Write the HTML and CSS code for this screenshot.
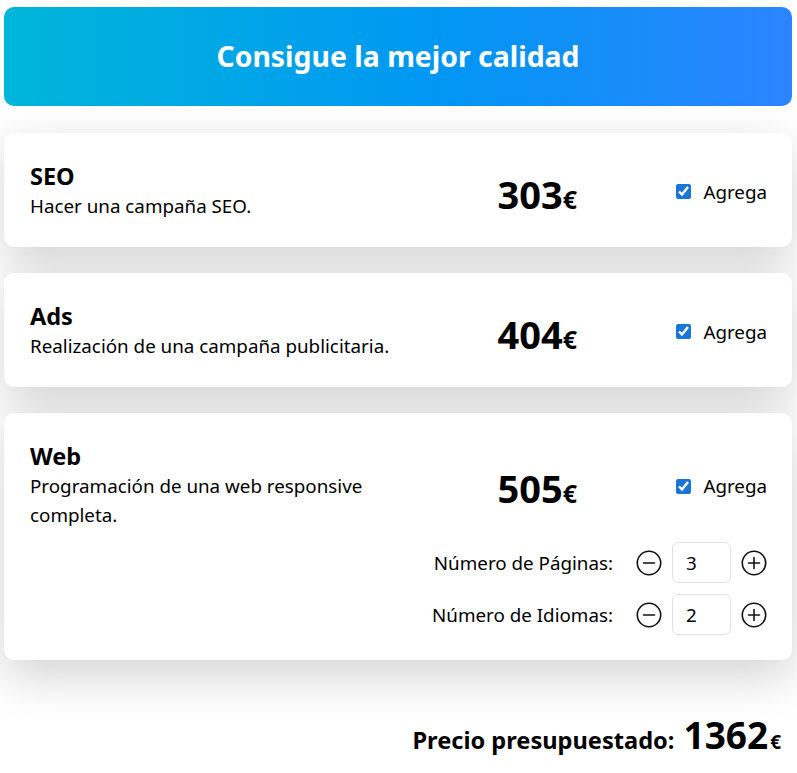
FILE: index.html
```html
<!DOCTYPE html>
<html lang="es">
<head>
<meta charset="utf-8">
<title>Presupuesto</title>
<link rel="stylesheet" href="styles.css">
</head>
<body>
<div class="page">
  <header class="hero">
    <h1 class="hero-title">Consigue la mejor calidad</h1>
  </header>

  <section class="card">
    <div class="card-row">
      <div class="info">
        <h2 class="title">SEO</h2>
        <p class="desc">Hacer una campaña SEO.</p>
      </div>
      <div class="price">303<span class="cur">€</span></div>
      <label class="check"><input type="checkbox" checked><span>Agrega</span></label>
    </div>
  </section>

  <section class="card">
    <div class="card-row">
      <div class="info">
        <h2 class="title">Ads</h2>
        <p class="desc">Realización de una campaña publicitaria.</p>
      </div>
      <div class="price">404<span class="cur">€</span></div>
      <label class="check"><input type="checkbox" checked><span>Agrega</span></label>
    </div>
  </section>

  <section class="card">
    <div class="card-row">
      <div class="info">
        <h2 class="title">Web</h2>
        <p class="desc">Programación de una web responsive completa.</p>
      </div>
      <div class="price">505<span class="cur">€</span></div>
      <label class="check"><input type="checkbox" checked><span>Agrega</span></label>
    </div>
    <div class="options">
      <div class="opt-row">
        <span class="opt-label">Número de Páginas:</span>
        <button class="icon-btn" type="button" aria-label="menos">
          <svg viewBox="0 0 26 26" width="26" height="26"><circle cx="13" cy="13" r="11.7" fill="none" stroke="#111" stroke-width="1.6"/><path d="M7.5 13h11" stroke="#111" stroke-width="1.6" stroke-linecap="round"/></svg>
        </button>
        <input class="num" type="text" value="3">
        <button class="icon-btn" type="button" aria-label="más">
          <svg viewBox="0 0 26 26" width="26" height="26"><circle cx="13" cy="13" r="11.7" fill="none" stroke="#111" stroke-width="1.6"/><path d="M7.5 13h11M13 7.5v11" stroke="#111" stroke-width="1.6" stroke-linecap="round"/></svg>
        </button>
      </div>
      <div class="opt-row">
        <span class="opt-label">Número de Idiomas:</span>
        <button class="icon-btn" type="button" aria-label="menos">
          <svg viewBox="0 0 26 26" width="26" height="26"><circle cx="13" cy="13" r="11.7" fill="none" stroke="#111" stroke-width="1.6"/><path d="M7.5 13h11" stroke="#111" stroke-width="1.6" stroke-linecap="round"/></svg>
        </button>
        <input class="num" type="text" value="2">
        <button class="icon-btn" type="button" aria-label="más">
          <svg viewBox="0 0 26 26" width="26" height="26"><circle cx="13" cy="13" r="11.7" fill="none" stroke="#111" stroke-width="1.6"/><path d="M7.5 13h11M13 7.5v11" stroke="#111" stroke-width="1.6" stroke-linecap="round"/></svg>
        </button>
      </div>
    </div>
  </section>

  <footer class="total">
    <span class="total-label">Precio presupuestado:</span>
    <span class="total-value">1362</span><span class="total-cur">€</span>
  </footer>
</div>
</body>
</html>
```

FILE: styles.css
```css
* { box-sizing: border-box; }

html, body {
  margin: 0;
  padding: 0;
  background: #fff;
}

body {
  font-family: "Noto Sans", "Open Sans", sans-serif;
  color: #000;
}

.page {
  padding: 7px 5px 0 4px;
  display: flex;
  flex-direction: column;
}

.hero {
  height: 99px;
  border-radius: 10px;
  background: linear-gradient(90deg, #00b6d9 0%, #0097f3 55%, #2c84ff 100%);
  display: flex;
  align-items: center;
  justify-content: center;
}

.hero-title {
  margin: 0;
  color: #fff;
  font-size: 28.4px;
  font-weight: 700;
  line-height: 1.2;
}

.card {
  margin-top: 26px;
  background: #fff;
  border-radius: 10px;
  box-shadow: 0 16px 48px rgba(0, 0, 0, 0.175);
  padding: 29px 25px 25px 26px;
}

.hero + .card { margin-top: 27px; }

.card-row {
  display: grid;
  grid-template-columns: 368px 1fr auto;
  align-items: center;
  padding-bottom: 1px;
}

.title {
  margin: 0 0 2px;
  font-size: 23.5px;
  font-weight: 700;
  line-height: 28px;
}

.desc {
  margin: 0;
  font-size: 18.8px;
  line-height: 29px;
}

.price {
  text-align: center;
  font-size: 38px;
  font-weight: 700;
  line-height: 1;
  padding-top: 4px;
}

.cur {
  font-size: 25px;
}

.check {
  display: flex;
  align-items: center;
  gap: 12px;
  font-size: 18.8px;
}

.check input {
  margin: 0;
  width: 15px;
  height: 15px;
  accent-color: #1a76d6;
}

.options {
  margin-top: 11px;
  display: flex;
  flex-direction: column;
  gap: 11px;
}

.opt-row {
  display: flex;
  justify-content: flex-end;
  align-items: center;
}

.opt-label {
  font-size: 18.8px;
  margin-right: 23px;
}

.icon-btn {
  border: 0;
  background: none;
  padding: 0;
  width: 26px;
  height: 26px;
  display: flex;
}

.num {
  width: 59px;
  height: 41px;
  margin: 0 10px;
  border: 1px solid #dee2e6;
  border-radius: 6px;
  padding: 0 13px;
  font-family: inherit;
  font-size: 18.8px;
  color: #000;
}

.total {
  display: flex;
  justify-content: flex-end;
  align-items: baseline;
  padding: 56px 11px 0 0;
}

.total-label {
  font-size: 23.6px;
  font-weight: 700;
  margin-right: 9px;
}

.total-value {
  font-size: 37px;
  font-weight: 700;
  line-height: 1;
}

.total-cur {
  font-size: 19px;
  font-weight: 700;
  margin-left: 2px;
}
```
